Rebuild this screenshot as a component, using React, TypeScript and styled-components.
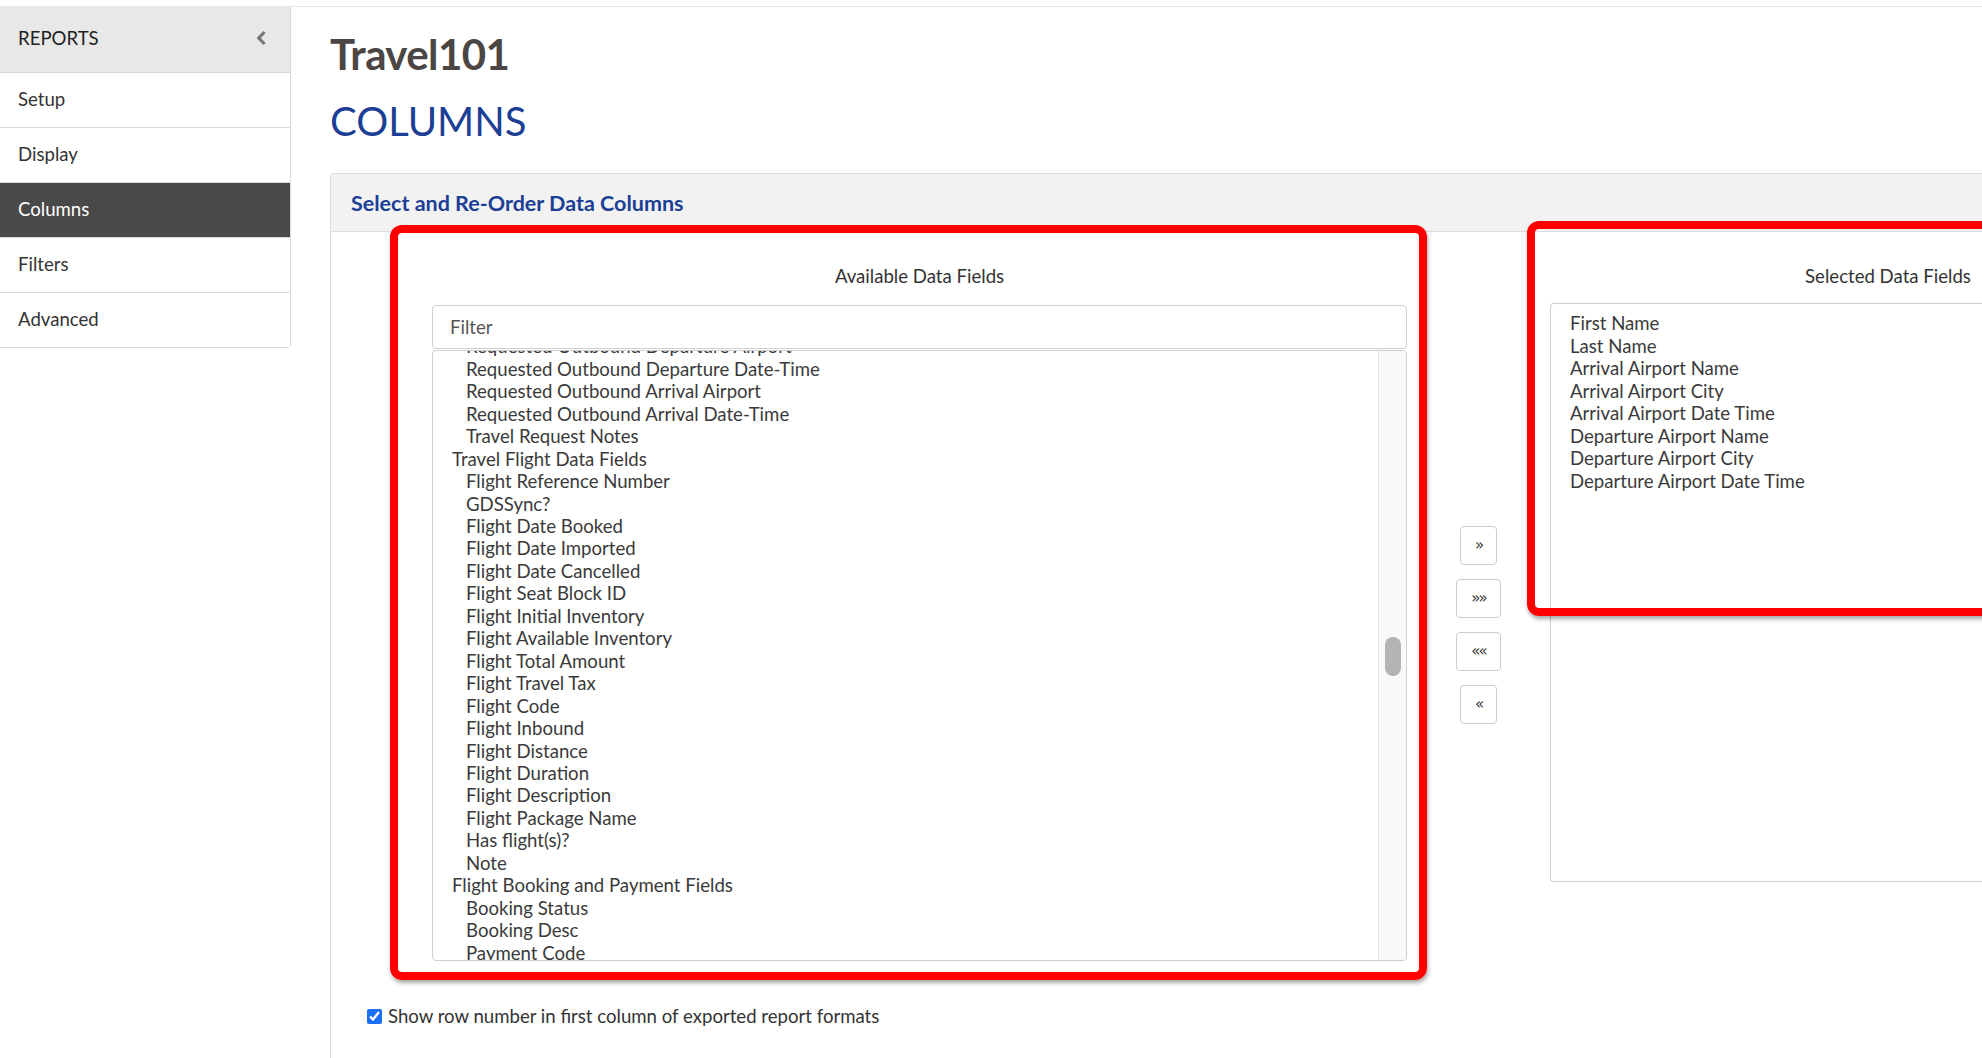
import React from "react";
import styled, { createGlobalStyle } from "styled-components";

const GlobalStyle = createGlobalStyle`
  html, body {
    margin: 0;
    padding: 0;
    overflow: hidden;
    background: #fff;
  }
  body {
    font-family: Lato, "Open Sans", "Liberation Sans", Arial, sans-serif;
    color: #333;
  }
`;

const Page = styled.div`
  padding-top: 6px;
  height: 1058px;
  box-sizing: border-box;
`;

const Layout = styled.div`
  display: flex;
  align-items: flex-start;
  border-top: 1px solid #e8e8e8;
`;

const Sidebar = styled.nav`
  width: 291px;
  flex-shrink: 0;
  box-sizing: border-box;
  border-right: 1px solid #d9d9d9;
  border-bottom: 1px solid #d9d9d9;
  border-bottom-right-radius: 4px;
`;

const SidebarHeader = styled.div`
  height: 66px;
  display: flex;
  align-items: center;
  justify-content: space-between;
  padding: 0 23px 3px 18px;
  box-sizing: border-box;
  background: #e8e8e8;
  border-bottom: 1px solid #d6d6d6;
  font-size: 18.6px;
  color: #222;
`;

const SidebarItem = styled.div<{ $active?: boolean }>`
  height: 54px;
  display: flex;
  align-items: center;
  padding: 0 0 3px 18px;
  box-sizing: border-box;
  font-size: 18.6px;
  color: ${(p) => (p.$active ? "#fff" : "#333")};
  background: ${(p) => (p.$active ? "#494949" : "#fff")};
  & + & {
    border-top: 1px solid #d9d9d9;
    height: 55px;
  }
`;

const Main = styled.main`
  flex: 1;
  min-width: 0;
  padding-left: 39px;
`;

const PageTitle = styled.h1`
  margin: 22px 0 0;
  font-size: 42px;
  line-height: 1.2;
  font-weight: 700;
  color: #4b4643;
  letter-spacing: -0.6px;
`;

const SectionTitle = styled.h2`
  margin: 18px 0 0;
  font-size: 40px;
  line-height: 1.2;
  font-weight: 400;
  color: #1c3f95;
`;

const Panel = styled.section`
  margin-top: 28px;
  width: max-content;
  border: 1px solid #dcdcdc;
  border-right: none;
  border-bottom: none;
  border-top-left-radius: 4px;
`;

const PanelHeader = styled.div`
  height: 57px;
  display: flex;
  align-items: center;
  padding: 0 20px;
  background: #f2f2f2;
  border-bottom: 1px solid #dedede;
  font-size: 21.5px;
  font-weight: 700;
  color: #1c3f95;
`;

const PanelBody = styled.div`
  padding: 33px 0 60px 36px;
`;

const Columns = styled.div`
  display: flex;
  align-items: flex-start;
  margin-left: 65px;
`;

const FieldColumn = styled.div<{ $width: number }>`
  position: relative;
  width: ${(p) => p.$width}px;
  flex-shrink: 0;
`;

const ColumnTitle = styled.div`
  text-align: center;
  font-size: 18.6px;
  line-height: 22px;
  margin-bottom: 18px;
  color: #333;
`;

const FilterInput = styled.input`
  display: block;
  width: 100%;
  height: 44px;
  box-sizing: border-box;
  border: 1px solid #cfcfcf;
  border-radius: 4px;
  padding: 0 17px;
  font-family: inherit;
  font-size: 18.6px;
  color: #333;
  outline: none;
  &::placeholder {
    color: #555;
  }
`;

const ListBox = styled.div<{ $height: number }>`
  display: flex;
  height: ${(p) => p.$height}px;
  margin-top: 1px;
  box-sizing: border-box;
  border: 1px solid #cfcfcf;
  border-radius: 4px;
  overflow: hidden;
`;

const Viewport = styled.div`
  flex: 1;
  overflow: hidden;
  padding-left: 19px;
`;

const OptionList = styled.div<{ $offset: number }>`
  margin-top: ${(p) => p.$offset}px;
`;

const Option = styled.div<{ $group?: boolean }>`
  font-size: 18.6px;
  line-height: 22.45px;
  white-space: nowrap;
  color: #3a3a3a;
  padding-left: ${(p) => (p.$group ? 0 : 14)}px;
`;

const ScrollTrack = styled.div`
  width: 28px;
  flex-shrink: 0;
  background: #f9f9f9;
  border-left: 1px solid #e3e3e3;
  padding: 286px 0 0 6px;
  box-sizing: border-box;
`;

const ScrollThumb = styled.div`
  width: 16px;
  height: 39px;
  border-radius: 8px;
  background: #b4b4b4;
`;

const SelectedBox = styled.div`
  height: 579px;
  margin-top: -2px;
  box-sizing: border-box;
  border: 1px solid #cfcfcf;
  border-right: none;
  border-radius: 4px 0 0 4px;
  padding: 8px 0 0 19px;
`;

const MoveButtons = styled.div`
  width: 143px;
  flex-shrink: 0;
  display: flex;
  flex-direction: column;
  align-items: center;
  gap: 14px;
  padding-top: 261px;
`;

const MoveButton = styled.button<{ $wide?: boolean }>`
  width: ${(p) => (p.$wide ? 45 : 37)}px;
  height: 39px;
  padding: 0 0 2px;
  background: #fff;
  border: 1px solid #cccccc;
  border-radius: 4px;
  font-family: "DejaVu Sans", sans-serif;
  font-size: 15px;
  letter-spacing: -2px;
  color: #333;
  cursor: pointer;
`;

const Annotation = styled.div<{ $top: number; $left: number; $right: number; $height: number }>`
  position: absolute;
  top: ${(p) => p.$top}px;
  left: ${(p) => p.$left}px;
  right: ${(p) => p.$right}px;
  height: ${(p) => p.$height}px;
  box-sizing: border-box;
  border: 8px solid #ff0000;
  border-radius: 12px;
  box-shadow: 1px 3px 4px rgba(0, 0, 0, 0.35);
  pointer-events: none;
`;

const CheckRow = styled.label`
  display: flex;
  align-items: center;
  margin-top: 44px;
  font-size: 18.6px;
  line-height: 22px;
  color: #333;
`;

const CheckBox = styled.input`
  width: 15px;
  height: 15px;
  margin: 0 6px 0 0;
  accent-color: #1a6ef4;
`;

const available: { label: string; group?: boolean }[] = [
  { label: "Requested Outbound Departure Airport" },
  { label: "Requested Outbound Departure Date-Time" },
  { label: "Requested Outbound Arrival Airport" },
  { label: "Requested Outbound Arrival Date-Time" },
  { label: "Travel Request Notes" },
  { label: "Travel Flight Data Fields", group: true },
  { label: "Flight Reference Number" },
  { label: "GDSSync?" },
  { label: "Flight Date Booked" },
  { label: "Flight Date Imported" },
  { label: "Flight Date Cancelled" },
  { label: "Flight Seat Block ID" },
  { label: "Flight Initial Inventory" },
  { label: "Flight Available Inventory" },
  { label: "Flight Total Amount" },
  { label: "Flight Travel Tax" },
  { label: "Flight Code" },
  { label: "Flight Inbound" },
  { label: "Flight Distance" },
  { label: "Flight Duration" },
  { label: "Flight Description" },
  { label: "Flight Package Name" },
  { label: "Has flight(s)?" },
  { label: "Note" },
  { label: "Flight Booking and Payment Fields", group: true },
  { label: "Booking Status" },
  { label: "Booking Desc" },
  { label: "Payment Code" },
  { label: "Payment Desc" },
];

const selected = [
  "First Name",
  "Last Name",
  "Arrival Airport Name",
  "Arrival Airport City",
  "Arrival Airport Date Time",
  "Departure Airport Name",
  "Departure Airport City",
  "Departure Airport Date Time",
];

const menu = ["Setup", "Display", "Columns", "Filters", "Advanced"];

const ChevronLeft = () => (
  <svg width="11" height="16" viewBox="0 0 11 16">
    <polyline points="8.5,2 2.8,8 8.5,14" fill="none" stroke="#777" strokeWidth="3.2" strokeLinejoin="miter" />
  </svg>
);

const App: React.FC = () => {
  return (
    <Page>
      <GlobalStyle />
      <Layout>
        <Sidebar>
          <SidebarHeader>
            REPORTS
            <ChevronLeft />
          </SidebarHeader>
          {menu.map((m) => (
            <SidebarItem key={m} $active={m === "Columns"}>
              {m}
            </SidebarItem>
          ))}
        </Sidebar>
        <Main>
          <PageTitle>Travel101</PageTitle>
          <SectionTitle>COLUMNS</SectionTitle>
          <Panel>
            <PanelHeader>Select and Re-Order Data Columns</PanelHeader>
            <PanelBody>
              <Columns>
                <FieldColumn $width={975}>
                  <ColumnTitle>Available Data Fields</ColumnTitle>
                  <FilterInput placeholder="Filter" />
                  <ListBox $height={611}>
                    <Viewport>
                      <OptionList $offset={-16}>
                        {available.map((o) => (
                          <Option key={o.label} $group={o.group}>
                            {o.label}
                          </Option>
                        ))}
                      </OptionList>
                    </Viewport>
                    <ScrollTrack>
                      <ScrollThumb />
                    </ScrollTrack>
                  </ListBox>
                  <Annotation $top={-40} $left={-42} $right={-20} $height={755} />
                </FieldColumn>
                <MoveButtons>
                  <MoveButton>»</MoveButton>
                  <MoveButton $wide>»»</MoveButton>
                  <MoveButton $wide>««</MoveButton>
                  <MoveButton>«</MoveButton>
                </MoveButtons>
                <FieldColumn $width={676}>
                  <ColumnTitle>Selected Data Fields</ColumnTitle>
                  <SelectedBox>
                    {selected.map((s) => (
                      <Option key={s} $group>
                        {s}
                      </Option>
                    ))}
                  </SelectedBox>
                  <Annotation $top={-44} $left={-23} $right={-40} $height={395} />
                </FieldColumn>
              </Columns>
              <CheckRow>
                <CheckBox type="checkbox" defaultChecked />
                Show row number in first column of exported report formats
              </CheckRow>
            </PanelBody>
          </Panel>
        </Main>
      </Layout>
    </Page>
  );
};

export default App;
